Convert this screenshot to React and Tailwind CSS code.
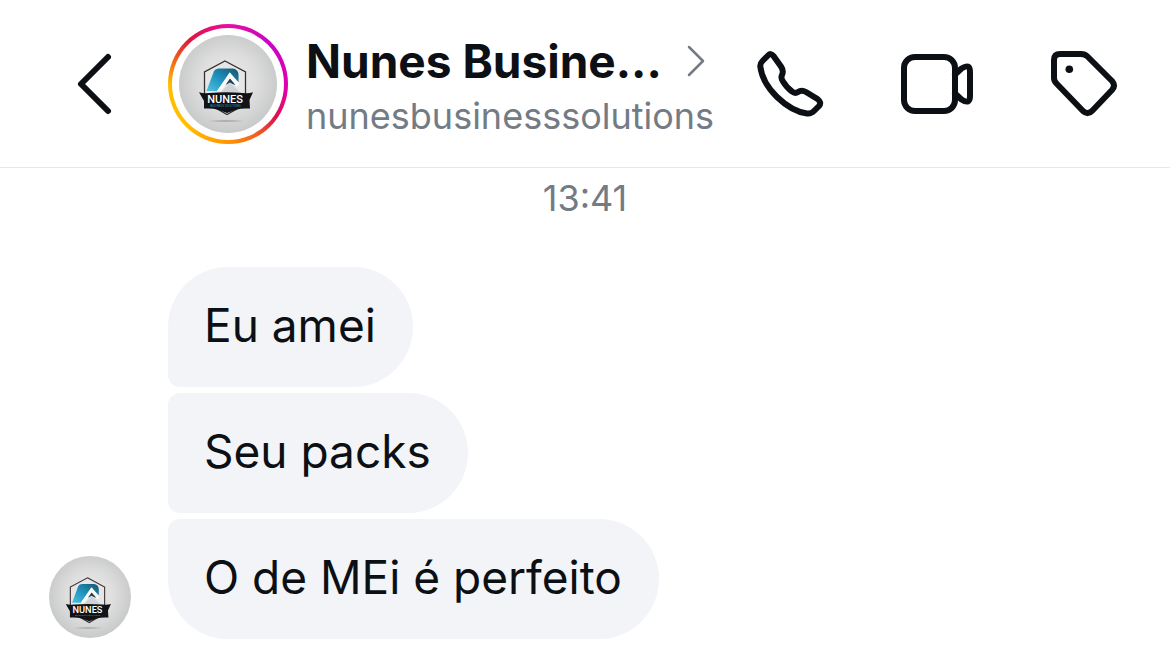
import { useId } from 'react';

function Logo({ className }) {
  const id = useId();
  return (
    <svg viewBox="0 0 98 98" className={className} role="img" aria-label="Nunes Business Solutions">
      <defs>
        <radialGradient id={`${id}bg`} cx="50%" cy="48%" r="52%">
          <stop offset="0" stopColor="#ececec" />
          <stop offset="0.55" stopColor="#dedede" />
          <stop offset="1" stopColor="#c8c9ca" />
        </radialGradient>
        <linearGradient id={`${id}blue`} x1="0" y1="1" x2="1" y2="0">
          <stop offset="0" stopColor="#55bfe0" />
          <stop offset="0.45" stopColor="#1f96c2" />
          <stop offset="1" stopColor="#15556f" />
        </linearGradient>
        <radialGradient id={`${id}shade`}>
          <stop offset="0" stopColor="#999" />
          <stop offset="1" stopColor="#999" stopOpacity="0" />
        </radialGradient>
      </defs>
      <circle cx="49" cy="49" r="49" fill={`url(#${id}bg)`} />
      <ellipse cx="47" cy="86" rx="20" ry="1.3" fill={`url(#${id}shade)`} />
      <path d="M46 26 66.500 37V60L63 71 48 79.500 33 71 25.500 60V37Z" fill="#e6e6e6" stroke="#3a3030" strokeWidth="1.300" />
      <path d="M35 36Q36.500 33.500 39.500 33.500H54Q59.500 34.500 59.500 40V47L51 38 38 56H27.500Z" fill={`url(#${id}blue)`} />
      <path d="M38 56 50.700 37.300 60.500 49.500 57.500 51.500 51 44 42 56Z" fill="#fafafa" />
      <path d="M46.500 50 51 43.500 56.500 50 53.500 49 51 47.500Z" fill="#1c4152" />
      <path d="M41 58 51 48 62 58Z" fill="#ccd2d5" />
      <path d="M20 57.300Q24 58.500 30 58Q47 56.500 64 58Q70 58.500 74 57.300L70.500 65 71 73.500Q62 73 58 74.500L48 78 38 74.500Q34 73 25 73.500L25 66Z" fill="#101318" />
      <text x="46" y="68" textAnchor="middle" fontFamily="Roboto, sans-serif" fontWeight="500" fontSize="11" fill="#fff">NUNES</text>
      <text x="46.500" y="72" textAnchor="middle" fontFamily="Roboto, sans-serif" fontSize="3" fill="#3795ad">BUSINESS SOLUTIONS</text>
    </svg>
  );
}

function Icon({ children }) {
  return (
    <svg viewBox="0 0 72 72" className="size-[72px]" fill="none" stroke="currentColor" strokeWidth="6" strokeLinecap="round" strokeLinejoin="round" aria-hidden="true">
      {children}
    </svg>
  );
}

const messages = [
  { text: 'Eu amei', shape: 'rounded-[60px] rounded-bl-xl' },
  { text: 'Seu packs', shape: 'rounded-r-[60px] rounded-l-xl' },
  { text: 'O de MEi é perfeito', shape: 'rounded-[60px] rounded-tl-xl' },
];

export default function App() {
  return (
    <div className="min-h-screen bg-white font-['Inter',sans-serif] text-[#0c1014]">
      <header className="flex items-center border-b border-[#e6e8ea] pt-6 pr-[50px] pb-[23px] pl-[72px]">
        <button aria-label="Voltar" className="mr-12 shrink-0">
          <svg viewBox="0 0 48 72" className="h-[72px] w-12" fill="none" stroke="currentColor" strokeWidth="6" strokeLinecap="round" strokeLinejoin="round" aria-hidden="true">
            <path d="M36 9 9 36 36 63" />
          </svg>
        </button>
        <a href="#perfil" className="flex min-w-0 items-center gap-[18px]">
          <span className="flex size-[120px] shrink-0 items-center justify-center rounded-full bg-[conic-gradient(#e60fa0,#c903c8_45deg,#e000aa_95deg,#e0104a_125deg,#f06020_150deg,#ff9500_180deg,#ffc000_225deg,#ffbe00_270deg,#f06018_295deg,#e0133e_320deg,#e60fa0)]">
            <span className="flex size-28 items-center justify-center rounded-full bg-white">
              <Logo className="size-[98px]" />
            </span>
          </span>
          <span className="flex min-w-0 flex-col pt-2">
            <span className="flex items-center gap-6">
              <span className="text-[46px] leading-[56px] font-bold whitespace-nowrap">Nunes Busine...</span>
              <svg viewBox="0 0 20 34" className="h-[34px] w-5" fill="none" stroke="#737b85" strokeWidth="2.5" strokeLinecap="round" strokeLinejoin="round" aria-hidden="true">
                <path d="M3 3 17 17 3 31" />
              </svg>
            </span>
            <span className="text-[36px] leading-[54px] whitespace-nowrap text-[#737b85]">nunesbusinesssolutions</span>
          </span>
        </a>
        <nav className="ml-auto flex shrink-0 gap-[75px]">
          <button aria-label="Ligar">
            <Icon>
              <path d="M14 7.500Q17 4.500 19.500 8L27 18.500Q30 23 28 27 26.500 30 29 33.500 33 40 38 43.500 41 46 44 44 47.500 41.500 52 44L63.500 51Q68 54.500 65 58L60 63Q57 66 53 65.500 38 63.500 23 49 8 34 6.300 18.500 6 15.500 8.500 13Z" />
            </Icon>
          </button>
          <button aria-label="Chamada de vídeo">
            <Icon>
              <rect x="3" y="9" width="51" height="54" rx="11" />
              <path d="M54 26.500 60.500 20.500Q69 15 69 24V48Q69 57 60.500 51.500L54 45.500" />
            </Icon>
          </button>
          <button aria-label="Etiqueta">
            <Icon>
              <path d="M12 6H33Q37 6 39.500 8.500L64 33Q68 37.500 64 42L44.500 62.500Q40 67.500 35 63L8.500 35.500Q6 33 6 30V12Q6 6 12 6Z" />
              <circle cx="21.300" cy="21.300" r="3.800" fill="currentColor" stroke="none" />
            </Icon>
          </button>
        </nav>
      </header>
      <main>
        <time className="block pt-1.5 text-center text-[36px] leading-[48px] text-[#737b85]">13:41</time>
        <section className="mt-[45px] flex items-end gap-[37px] pl-[49px]">
          <Logo className="mb-px size-[82px] shrink-0" />
          <ul className="flex flex-col items-start gap-1.5">
            {messages.map((m) => (
              <li key={m.text} className={`bg-[#f2f4f7] pt-[30px] pr-[37px] pb-[34px] pl-9 text-[46px] leading-[56px] ${m.shape}`}>{m.text}</li>
            ))}
          </ul>
        </section>
      </main>
    </div>
  );
}
